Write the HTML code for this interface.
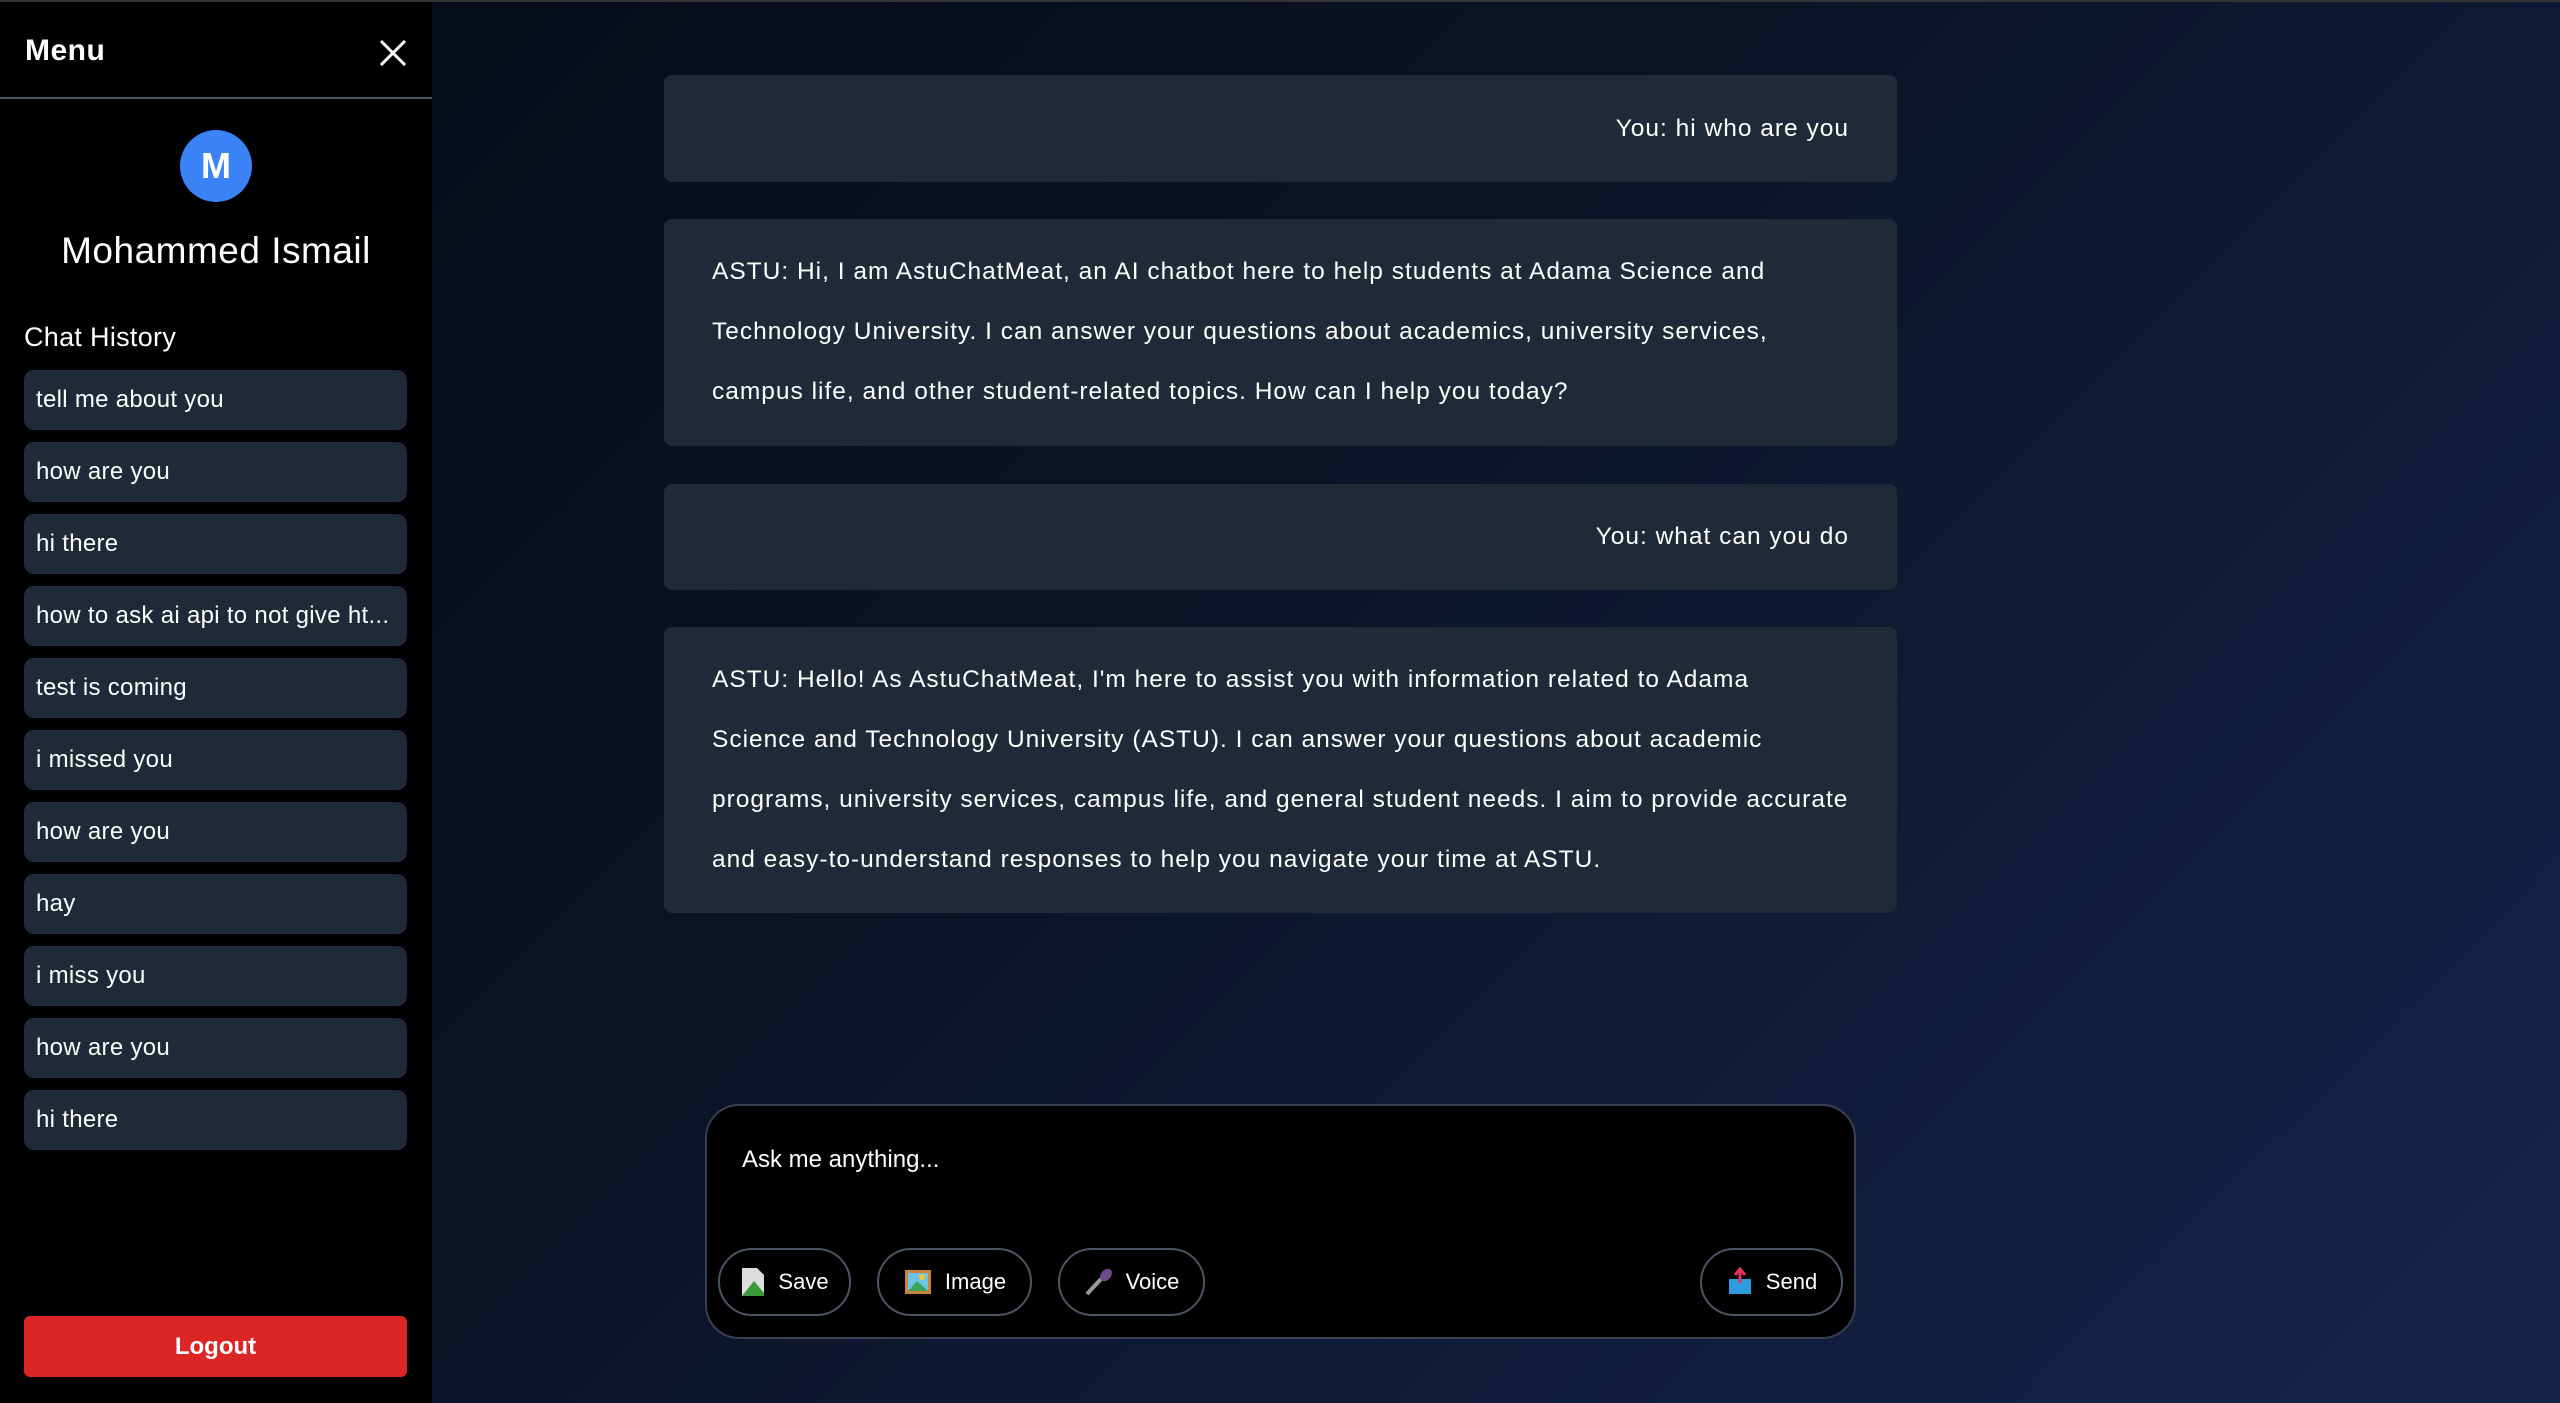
<!DOCTYPE html>
<html><head><meta charset="utf-8"><style>
*{box-sizing:border-box;margin:0;padding:0}
html,body{width:2560px;height:1403px;overflow:hidden}
body{font-family:"Liberation Sans","DejaVu Sans",sans-serif;color:#fff;background:linear-gradient(135deg,#050a16 0%,#0b1327 45%,#15254a 100%);position:relative;border-top:2px solid #333}
.side{position:absolute;left:0;top:0;width:432px;height:1401px;background:#000}
.top{height:97px;border-bottom:2px solid #4b5563;position:relative}
.top h1{position:absolute;left:25px;top:32px;font-size:30px;font-weight:bold;letter-spacing:.5px}
.top svg{position:absolute;left:378px;top:36px}
.av{position:absolute;left:180px;top:128px;width:72px;height:72px;border-radius:50%;background:#3b82f6;font-size:36px;font-weight:bold;text-align:center;line-height:72px}
.name{position:absolute;left:0;width:432px;top:228px;text-align:center;font-size:37px;letter-spacing:.5px}
.ch{position:absolute;left:24px;top:320px;font-size:27px;letter-spacing:.3px}
.item{position:absolute;left:24px;width:383px;height:60px;background:#1f2937;border-radius:10px;font-size:24px;line-height:60px;padding-left:12px;letter-spacing:.3px}
.logout{position:absolute;left:24px;top:1314px;width:383px;height:61px;background:#dc2626;border-radius:6px;font-size:24px;font-weight:bold;text-align:center;line-height:61px}
.msg{position:absolute;left:664px;width:1233px;background:#1f2937;border-radius:8px;font-size:24.5px;line-height:60px;padding:0 48px;letter-spacing:1.0px}
.r{text-align:right}
.inp{position:absolute;left:705px;top:1102px;width:1151px;height:235px;background:#000;border:2px solid #374151;border-radius:34px}
.ph{position:absolute;left:35px;top:40px;font-size:24px}
.btn{position:absolute;top:142px;height:68px;border:2px solid #4b5563;border-radius:34px;font-size:22px;display:flex;align-items:center;justify-content:center;gap:12px}
</style></head><body>
<div class="side">
<div class="top"><h1>Menu</h1><svg width="30" height="30" viewBox="0 0 30 30"><path d="M3 3L27 27M27 3L3 27" stroke="#fff" stroke-width="3"/></svg></div>
<div class="av">M</div>
<div class="name">Mohammed Ismail</div>
<div class="ch">Chat History</div>
<div class="item" style="top:368px">tell me about you</div>
<div class="item" style="top:440px">how are you</div>
<div class="item" style="top:512px">hi there</div>
<div class="item" style="top:584px">how to ask ai api to not give ht...</div>
<div class="item" style="top:656px">test is coming</div>
<div class="item" style="top:728px">i missed you</div>
<div class="item" style="top:800px">how are you</div>
<div class="item" style="top:872px">hay</div>
<div class="item" style="top:944px">i miss you</div>
<div class="item" style="top:1016px">how are you</div>
<div class="item" style="top:1088px">hi there</div>
<div class="logout">Logout</div>
</div>
<div class="msg r" style="top:73px;height:107px;line-height:107px">You: hi who are you</div>
<div class="msg" style="top:217px;height:227px;padding-top:23px">ASTU: Hi, I am AstuChatMeat, an AI chatbot here to help students at Adama Science and Technology University. I can answer your questions about academics, university services, campus life, and other student-related topics. How can I help you today?</div>
<div class="msg r" style="top:482px;height:106px;line-height:106px">You: what can you do</div>
<div class="msg" style="top:625px;height:286px;padding-top:23px">ASTU: Hello! As AstuChatMeat, I'm here to assist you with information related to Adama Science and Technology University (ASTU). I can answer your questions about academic programs, university services, campus life, and general student needs. I aim to provide accurate and easy-to-understand responses to help you navigate your time at ASTU.</div>
<div class="inp">
<div class="ph">Ask me anything...</div>
<div class="btn" style="left:11px;width:133px"><svg width="26" height="30" viewBox="0 0 26 30"><path d="M2 1H17L24 8V29H2Z" fill="#ddd"/><path d="M2 29L14 14L24 26V29Z" fill="#3a9a3a"/></svg>Save</div>
<div class="btn" style="left:170px;width:155px"><svg width="30" height="28" viewBox="0 0 30 28"><rect x="2" y="2" width="26" height="24" fill="#c8843c"/><rect x="5" y="5" width="20" height="18" fill="#6cc3e8"/><path d="M5 23L14 13L25 23Z" fill="#3aa55a"/><circle cx="19" cy="9" r="3" fill="#f5c542"/></svg>Image</div>
<div class="btn" style="left:351px;width:147px"><svg width="30" height="30" viewBox="0 0 30 30"><path d="M3 27L17 12" stroke="#999" stroke-width="4"/><ellipse cx="22" cy="8" rx="5" ry="7" transform="rotate(40 22 8)" fill="#6b4b8a"/></svg>Voice</div>
<div class="btn" style="left:993px;width:143px"><svg width="28" height="30" viewBox="0 0 28 30"><path d="M3 12H25V27H3Z" fill="#2d9de0"/><path d="M14 16V3M9 8L14 2L19 8" stroke="#e8325a" stroke-width="3" fill="none"/></svg>Send</div>
</div>
</body></html>
